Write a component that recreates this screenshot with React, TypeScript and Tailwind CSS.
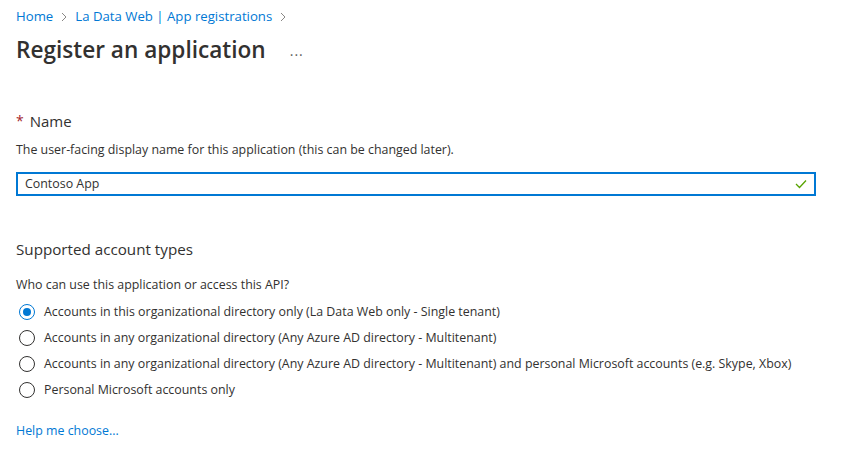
import React, { useState } from 'react';

const options = [
  'Accounts in this organizational directory only (La Data Web only - Single tenant)',
  'Accounts in any organizational directory (Any Azure AD directory - Multitenant)',
  'Accounts in any organizational directory (Any Azure AD directory - Multitenant) and personal Microsoft accounts (e.g. Skype, Xbox)',
  'Personal Microsoft accounts only',
];

function Chevron() {
  return (
    <svg width="8" height="10" viewBox="0 0 8 10" className="mx-[7px]">
      <path d="M2 1 L6 5 L2 9" fill="none" stroke="#8a8886" strokeWidth="1" />
    </svg>
  );
}

export default function App() {
  const [selected, setSelected] = useState(0);
  const [name, setName] = useState('Contoso App');

  return (
    <div className="w-[857px] h-[461px] bg-white text-[#323130] px-4 font-['Segoe_UI','Open_Sans',sans-serif]">
      {/* Breadcrumb */}
      <div className="flex items-center pt-[8px] h-[25px] text-[13.2px] text-[#0078d4]">
        <span>Home</span>
        <Chevron />
        <span>La Data Web | App registrations</span>
        <Chevron />
      </div>

      {/* Title */}
      <div className="flex items-center h-[50px]">
        <h1 className="text-[22.6px] font-semibold leading-none">Register an application</h1>
        <span className="ml-[24px] text-[14px] text-[#605e5c] tracking-[1px]">...</span>
      </div>

      {/* Name */}
      <div className="mt-[36px] flex items-center text-[15px] leading-[20px]">
        <span className="text-[#a4262c] mr-[6px] text-[14px]">*</span>
        <span>Name</span>
      </div>
      <p className="mt-[11px] text-[12.4px] leading-[16px]">
        The user-facing display name for this application (this can be changed later).
      </p>
      <div className="mt-[14px] flex items-center w-[800px] h-[24px] border-2 border-[#0078d4] px-[7px]">
        <input
          value={name}
          onChange={(e) => setName(e.target.value)}
          className="flex-1 outline-none text-[12.4px] bg-transparent"
        />
        <svg width="12" height="10" viewBox="0 0 12 10" className="ml-1">
          <path d="M1 5 L4.5 8.5 L11 1.5" fill="none" stroke="#57a300" strokeWidth="1.3" />
        </svg>
      </div>

      {/* Supported account types */}
      <h2 className="mt-[42px] text-[15.2px] leading-[22px]">Supported account types</h2>
      <p className="mt-[17px] text-[12.4px] leading-[16px]">Who can use this application or access this API?</p>

      <div className="mt-[6px] flex flex-col">
        {options.map((label, i) => (
          <label key={i} className="flex items-center h-[26px] cursor-pointer" onClick={() => setSelected(i)}>
            <span
              className={`w-[16px] h-[16px] ml-[3px] rounded-full border flex items-center justify-center ${
                selected === i ? 'border-[#0078d4]' : 'border-[#323130]'
              }`}
            >
              {selected === i && <span className="w-[8px] h-[8px] rounded-full bg-[#0078d4]" />}
            </span>
            <span className="ml-[9px] text-[12.4px]">{label}</span>
          </label>
        ))}
      </div>

      <a className="block mt-[19px] text-[12.4px] text-[#0078d4]">Help me choose...</a>
    </div>
  );
}
